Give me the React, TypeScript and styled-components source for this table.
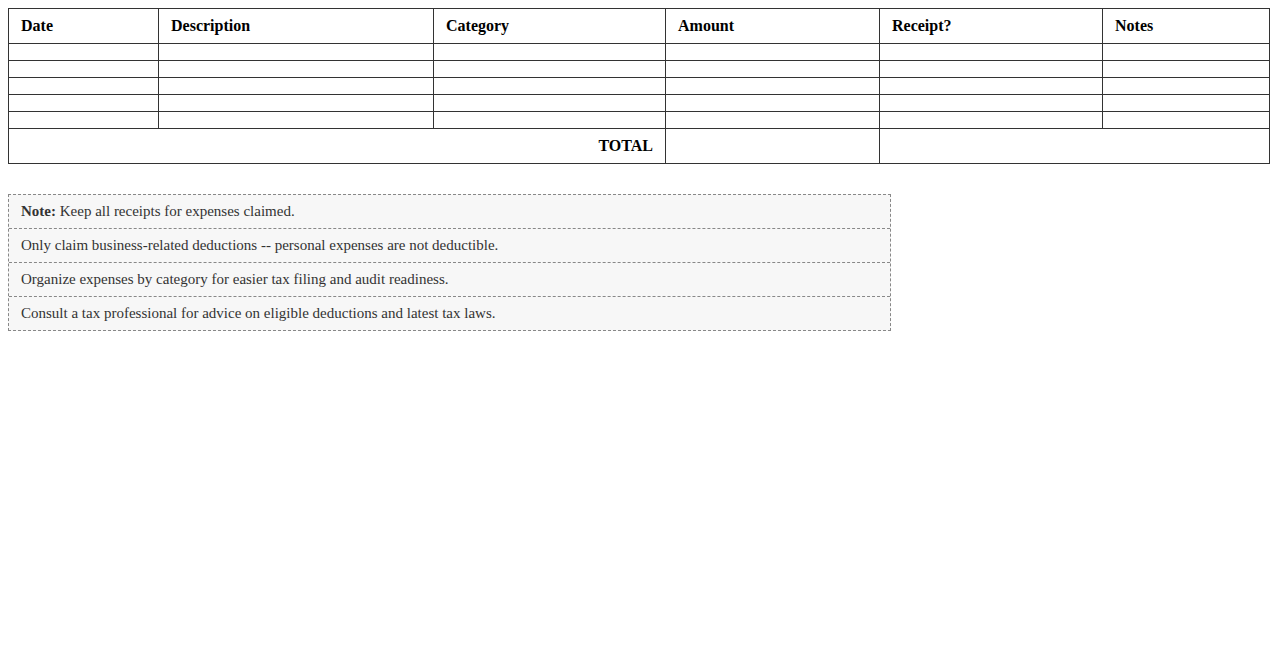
import styled, { createGlobalStyle } from "styled-components";

const GlobalStyle = createGlobalStyle`
    body {
        margin: 8px;
        background: #fff;
        font-family: "Liberation Serif", "Times New Roman", serif;
        color: #000;
    }
`;

const Sheet = styled.table`
    width: 100%;
    border-collapse: collapse;
    table-layout: fixed;
    font-size: 16px;
`;

const Column = styled.col<{ w: number }>`
    width: ${(props) => props.w}px;
`;

const HeadCell = styled.th`
    border: 1px solid #333;
    padding: 8px 12px;
    text-align: left;
    font-weight: 700;
    line-height: 18px;
`;

const Cell = styled.td`
    border: 1px solid #333;
    padding: 8px 12px;
    line-height: 18px;
`;

const TotalLabel = styled(Cell)`
    text-align: right;
    font-weight: 700;
`;

const NotesBox = styled.div`
    box-sizing: border-box;
    width: 70%;
    margin-top: 30px;
    border: 1px dashed #888;
    background: #f7f7f7;
    color: #333;
    font-size: 15px;
`;

const NoteRow = styled.div`
    padding: 8px 12px;
    line-height: 17px;
    & + & {
        border-top: 1px dashed #888;
    }
`;

const columns = [
    { label: "Date", w: 150 },
    { label: "Description", w: 275 },
    { label: "Category", w: 232 },
    { label: "Amount", w: 214 },
    { label: "Receipt?", w: 223 },
    { label: "Notes", w: 167 },
];

const notes = [
    "Only claim business-related deductions -- personal expenses are not deductible.",
    "Organize expenses by category for easier tax filing and audit readiness.",
    "Consult a tax professional for advice on eligible deductions and latest tax laws.",
];

const App = () => {
    return (
        <>
            <GlobalStyle />
            <Sheet>
                <colgroup>
                    {columns.map((col) => (
                        <Column key={col.label} w={col.w} />
                    ))}
                </colgroup>
                <thead>
                    <tr>
                        {columns.map((col) => (
                            <HeadCell key={col.label}>{col.label}</HeadCell>
                        ))}
                    </tr>
                </thead>
                <tbody>
                    {[0, 1, 2, 3, 4].map((row) => (
                        <tr key={row}>
                            {columns.map((col) => (
                                <Cell key={col.label} />
                            ))}
                        </tr>
                    ))}
                    <tr>
                        <TotalLabel colSpan={3}>TOTAL</TotalLabel>
                        <Cell />
                        <Cell colSpan={2} />
                    </tr>
                </tbody>
            </Sheet>
            <NotesBox>
                <NoteRow>
                    <strong>Note:</strong> Keep all receipts for expenses claimed.
                </NoteRow>
                {notes.map((note) => (
                    <NoteRow key={note}>{note}</NoteRow>
                ))}
            </NotesBox>
        </>
    );
};

export default App;
